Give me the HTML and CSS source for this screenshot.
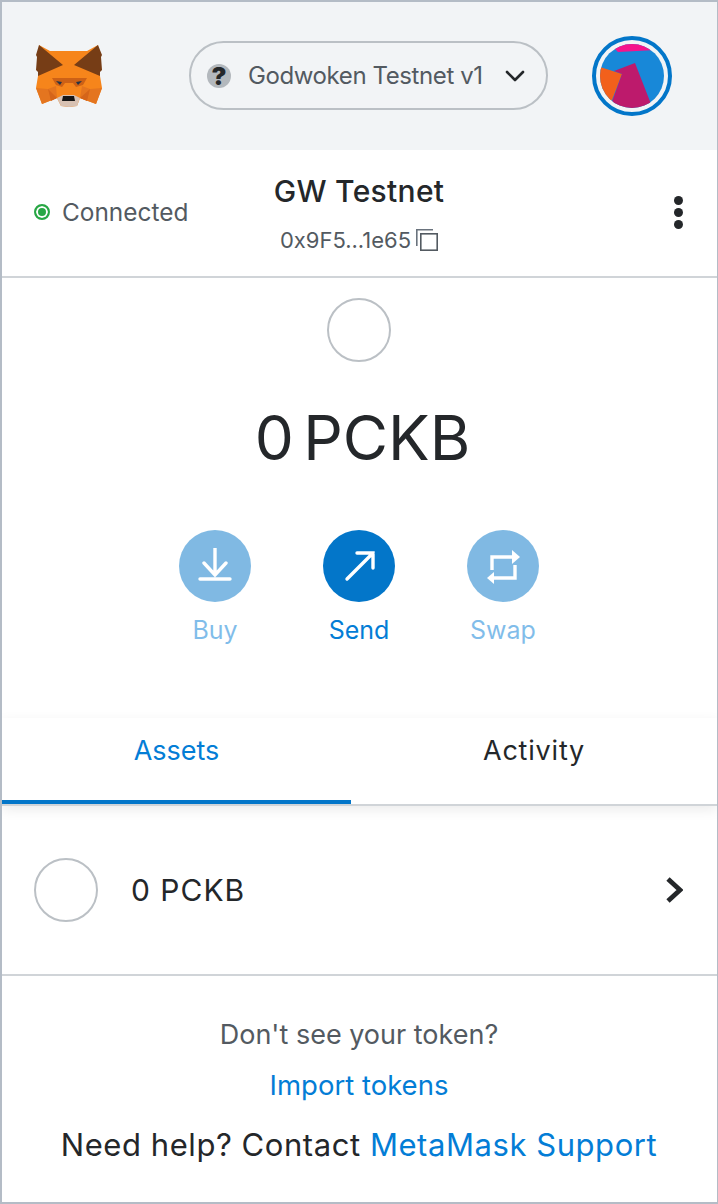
FILE: index.html
```html
<!DOCTYPE html>
<html>
<head>
<meta charset="utf-8" />
<title>MetaMask</title>
<link rel="stylesheet" href="styles.css">
</head>
<body>
<div class="popup">
	<div class="topBar">
		<svg class="fox" width="66" height="63" viewBox="0 0 66 63">
			<polygon fill="#f6851b" points="3,0 14,6 51,6 62,0 64,31 66,43 60,59 44,53 41,61 33,62 25,61 21,53 6,59 0,43 2,31" />
			<polygon fill="#763d16" points="3,0 27,20 2,31 2,27 0,25 1,12 0,10" />
			<polygon fill="#763d16" points="62,0 38,20 64,31 64,27 66,25 65,12 66,10" />
			<polygon fill="#e4751f" points="0,43 12,44 20,41 21,53 6,59" />
			<polygon fill="#e4751f" points="66,43 54,44 46,41 44,53 60,59" />
			<polygon fill="#d5651a" points="12,44 21,53 15,56" />
			<polygon fill="#d5651a" points="54,44 44,53 51,56" />
			<polygon fill="#cd6116" points="16,33 51,33 47,40 40,42 37,38 29,38 26,42 20,40" />
			<polygon fill="#d7c1b3" points="21,53 27,50 38,50 44,53 41,61 33,62 25,61" />
			<polygon fill="#161616" points="27,51 38,51 39,56 26,56" />
			<polygon fill="#233447" points="20,36 26,37 24,40" />
			<polygon fill="#233447" points="46,36 40,37 42,40" />
		</svg>
		<div class="netPill">
			<span class="netIcon">?</span>
			<span class="netName">Godwoken Testnet v1</span>
			<svg class="netCaret" width="20" height="12" viewBox="0 0 20 12"><polyline points="2,2 10,10 18,2" fill="none" stroke="#24272a" stroke-width="2.6" stroke-linecap="round" stroke-linejoin="round" /></svg>
		</div>
		<div class="avatar">
			<svg width="64" height="64" viewBox="0 0 64 64">
				<defs><clipPath id="avatarClip"><circle cx="32" cy="32" r="32" /></clipPath></defs>
				<g clip-path="url(#avatarClip)">
					<rect width="64" height="64" fill="#1888d8" />
					<polygon fill="#f5148c" points="10,0 64,0 64,9 56,6 18,8" />
					<polygon fill="#f2601c" points="0,23 22,30 12,56 0,64" />
					<polygon fill="#bd1a6c" points="14,27 35,19 51,60 40,64 10,64 13,55 22,30" />
				</g>
			</svg>
		</div>
	</div>
	<div class="accountRow">
		<div class="status"><span class="statusDot"></span>Connected</div>
		<div class="account">
			<div class="accountName">GW Testnet</div>
			<div class="accountAddr">0x9F5...1e65<svg width="22" height="22" viewBox="0 0 22 22"><path d="M0.8 17V0.8H17" fill="none" stroke="#6a737d" stroke-width="1.6" /><rect x="4.8" y="4.8" width="16.4" height="16.4" fill="none" stroke="#535a61" stroke-width="1.6" /></svg></div>
		</div>
		<div class="menuDots"><i></i><i></i><i></i></div>
	</div>
	<div class="balance">
		<div class="tokenCircle"></div>
		<div class="balanceText">0 PCKB</div>
		<div class="actions">
			<div class="action faded">
				<div class="actionBtn"><svg width="36" height="36" viewBox="0 0 36 36"><path d="M18 0V27M7 15L18 27L29 15M3 31H33" fill="none" stroke="#fff" stroke-width="3.4" stroke-linecap="round" /></svg></div>
				<span>Buy</span>
			</div>
			<div class="action">
				<div class="actionBtn"><svg width="36" height="36" viewBox="0 0 36 36"><path d="M6 31L32 5M16 5H32V20" fill="none" stroke="#fff" stroke-width="3.4" stroke-linecap="round" /></svg></div>
				<span>Send</span>
			</div>
			<div class="action faded">
				<div class="actionBtn"><svg width="36" height="36" viewBox="0 0 36 36"><path d="M7 22V9H27M30 17V30H9" fill="none" stroke="#fff" stroke-width="3.4" /><polygon fill="#fff" points="27,2 35,9 27,16" /><polygon fill="#fff" points="9,24 2,30 9,36" /></svg></div>
				<span>Swap</span>
			</div>
		</div>
	</div>
	<div class="tabs">
		<div class="tab tabAssets active">Assets</div>
		<div class="tab tabActivity">Activity</div>
	</div>
	<div class="assetRow">
		<div class="tokenCircle"></div>
		<div class="assetText">0 PCKB</div>
		<svg class="assetChevron" width="18" height="28" viewBox="0 0 18 28"><polyline points="3,3 15,14 3,25" fill="none" stroke="#24272a" stroke-width="4.8" stroke-linejoin="miter" /></svg>
	</div>
	<div class="footer">
		<div class="footNote">Don't see your token?</div>
		<div class="footLink">Import tokens</div>
		<div class="footHelp">Need help? Contact <a>MetaMask Support</a></div>
	</div>
</div>
</body>
</html>
```

FILE: styles.css
```css
* {
	padding:0;
	margin:0;
	box-sizing:border-box;
}
html,body {
	height:100%;
	background:#fff;
}
body {
	font-family:"Inter","Liberation Sans",sans-serif;
	color:#24272a;
}
.popup {
	width:718px;
	height:1204px;
	border:2px solid #b4bcc6;
	border-right-width:1px;
	display:flex;
	flex-direction:column;
	overflow:hidden;
}
.topBar {
	height:148px;
	flex:none;
	background:#f2f4f6;
	display:flex;
	align-items:center;
	padding:0 44px 0 34px;
}
.fox {
	flex:none;
}
.netPill {
	width:359px;
	height:69px;
	margin:-1px 44px 0 87px;
	border:2px solid #bbc0c5;
	border-radius:36px;
	display:flex;
	align-items:center;
	padding:0 21px 0 16px;
	flex:none;
}
.netIcon {
	width:24px;
	height:24px;
	border-radius:50%;
	background:#b3b8bd;
	color:#24272a;
	font-weight:900;
	font-size:25px;
	line-height:24px;
	text-align:center;
	flex:none;
}
.netName {
	font-size:24px;
	letter-spacing:-0.4px;
	color:#535a61;
	margin-left:17px;
	flex:1;
	white-space:nowrap;
}
.netCaret {
	flex:none;
}
.avatar {
	width:80px;
	height:80px;
	flex:none;
	border:4px solid #0376c9;
	border-radius:50%;
	padding:4px;
}
.accountRow {
	height:128px;
	flex:none;
	border-bottom:2px solid #d0d4d8;
	position:relative;
	display:flex;
	align-items:center;
	justify-content:space-between;
	padding:0 32px 0 32px;
}
.status {
	font-size:24.4px;
	color:#535a61;
	display:flex;
	align-items:center;
	margin-top:-2px;
}
.statusDot {
	width:16px;
	height:16px;
	border-radius:50%;
	border:2px solid #28a745;
	background:#28a745;
	box-shadow:inset 0 0 0 2px #fff;
	margin-right:12px;
}
.account {
	position:absolute;
	left:0;
	right:1px;
	top:22px;
	text-align:center;
}
.accountName {
	font-size:30px;
	line-height:38px;
	font-weight:500;
	letter-spacing:0.3px;
	color:#24272a;
}
.accountAddr {
	margin-top:17px;
	font-size:22px;
	line-height:26px;
	color:#535a61;
	display:flex;
	justify-content:center;
	align-items:center;
	gap:5px;
}
.menuDots {
	display:flex;
	flex-direction:column;
	gap:3px;
	margin-top:-2px;
	margin-right:2px;
}
.menuDots i {
	width:9px;
	height:9px;
	border-radius:50%;
	background:#24272a;
	display:block;
}
.balance {
	height:440px;
	flex:none;
	display:flex;
	flex-direction:column;
	align-items:center;
	padding:20px 1px 0 0;
}
.tokenCircle {
	width:64px;
	height:64px;
	border-radius:50%;
	border:2px solid #bbc0c5;
	flex:none;
}
.balanceText {
	font-size:62px;
	word-spacing:-8px;
	line-height:72px;
	margin:40px 0 0 7px;
	color:#24272a;
}
.actions {
	display:flex;
	gap:72px;
	margin-top:56px;
}
.action {
	width:72px;
	display:flex;
	flex-direction:column;
	align-items:center;
	color:#037dd6;
	font-size:25px;
	white-space:nowrap;
}
.action span {
	margin-top:12px;
	line-height:32px;
}
.action.faded {
	opacity:0.5;
}
.actionBtn {
	width:72px;
	height:72px;
	border-radius:50%;
	background:#0376c9;
	display:flex;
	align-items:center;
	justify-content:center;
}
.tabs {
	height:88px;
	flex:none;
	display:flex;
	border-bottom:2px solid #d0d4d8;
	box-shadow:0 4px 12px rgba(0,0,0,0.08);
}
.tab {
	text-align:center;
	font-size:27px;
	line-height:66px;
	color:#24272a;
}
.tabAssets {
	width:349px;
}
.tabActivity {
	flex:1;
	letter-spacing:0.8px;
}
.tab.active {
	color:#037dd6;
	border-bottom:4px solid #0376c9;
	height:86px;
}
.assetRow {
	height:170px;
	flex:none;
	border-bottom:2px solid #d0d4d8;
	display:flex;
	align-items:center;
	padding:0 34px 0 32px;
}
.assetText {
	flex:1;
	margin-left:33px;
	font-size:30px;
	letter-spacing:1px;
	color:#24272a;
}
.footer {
	flex:1;
	text-align:center;
	padding:40px 1px 0 0;
	font-size:27px;
}
.footNote {
	color:#535a61;
	line-height:38px;
}
.footLink {
	color:#037dd6;
	font-size:27.5px;
	line-height:38px;
	margin-top:12px;
}
.footHelp {
	font-size:31px;
	letter-spacing:0.56px;
	line-height:38px;
	margin-top:22px;
	color:#24272a;
}
.footHelp a {
	color:#037dd6;
}
```
